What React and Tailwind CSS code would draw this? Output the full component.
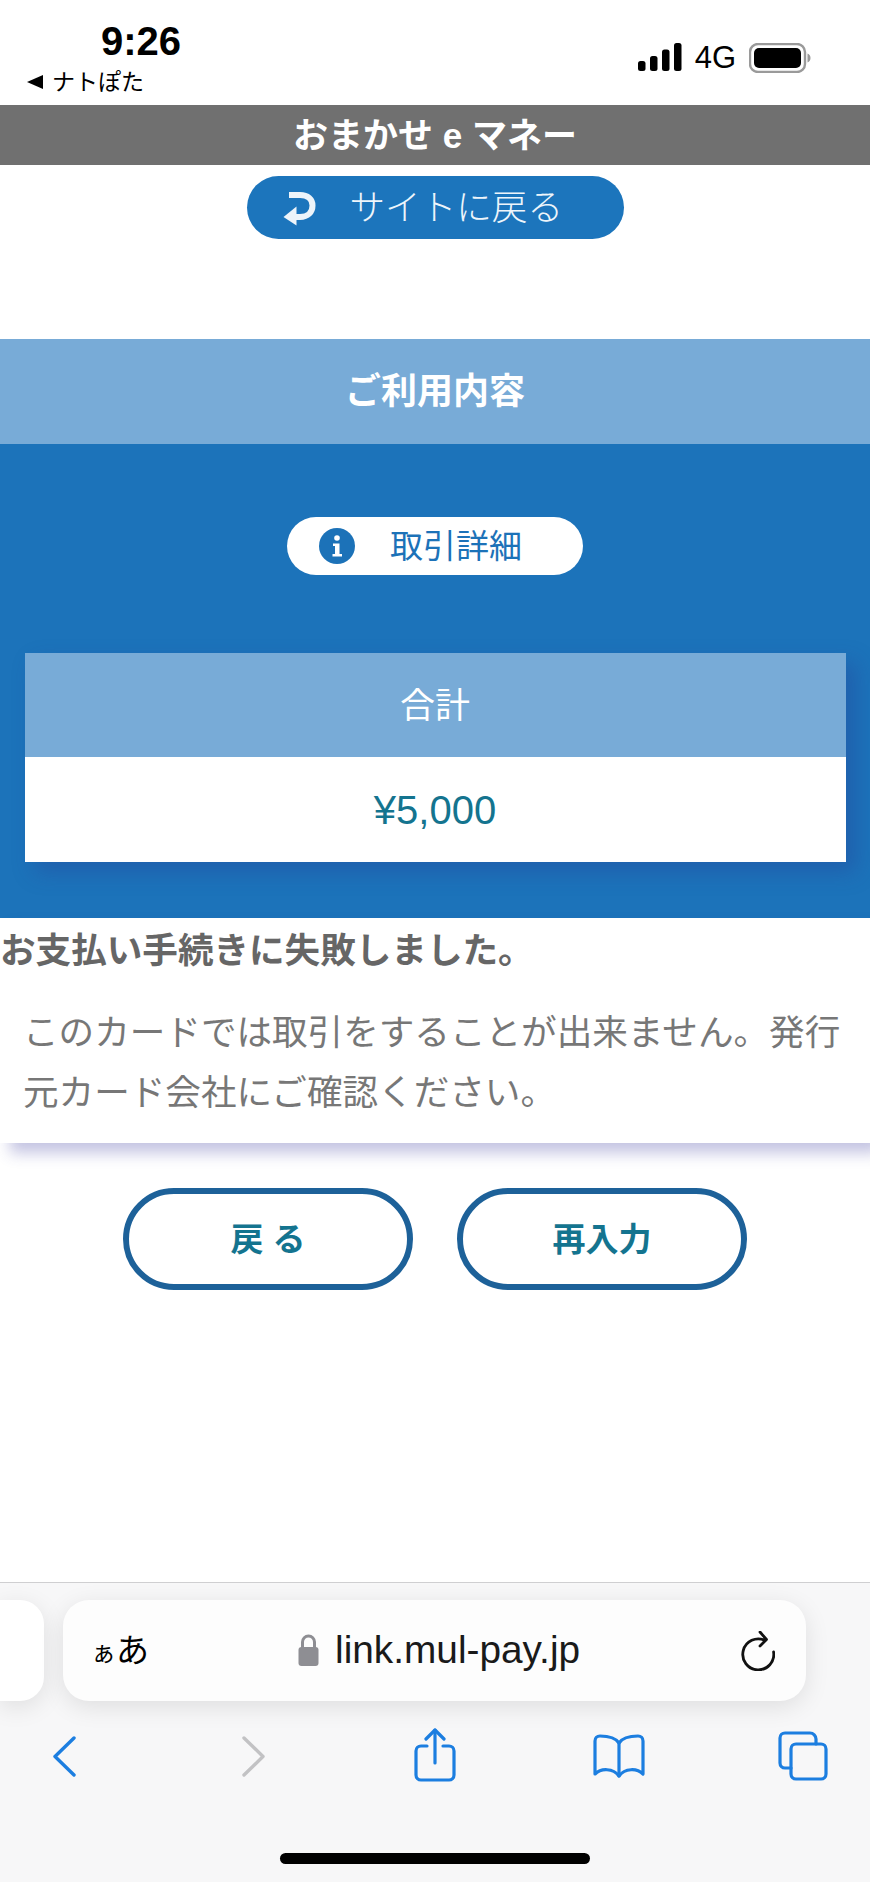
const F = "font-['Liberation_Sans','Noto_Sans_CJK_JP',sans-serif]";

function Signal() {
  return (
    <svg width="44" height="28" viewBox="0 0 44 28" fill="#000">
      <rect x="0" y="18" width="7.5" height="10" rx="2.5" />
      <rect x="12" y="13" width="7.5" height="15" rx="2.5" />
      <rect x="24" y="6.5" width="7.5" height="21.5" rx="2.5" />
      <rect x="36" y="0" width="7.5" height="28" rx="2.5" />
    </svg>
  );
}

function Battery() {
  return (
    <svg width="62" height="30" viewBox="0 0 62 30">
      <rect x="1" y="1" width="55" height="28" rx="8" fill="none" stroke="#9a9a9a" strokeWidth="2.4" />
      <rect x="5" y="5" width="47" height="20" rx="5" fill="#000" />
      <path d="M58.5 10.5c2 .6 3 2.4 3 4.5s-1 3.9-3 4.5z" fill="#9a9a9a" />
    </svg>
  );
}

function ReturnIcon() {
  return (
    <svg width="36" height="36" viewBox="0 0 36 36" fill="none" className="shrink-0">
      <path d="M6 5H17C25 5 29.500 9.500 29.500 15.500C29.500 22 25 27 17 27H10" stroke="#edf4fa" strokeWidth="6" />
      <path d="M13.500 16.500V35.500L0.500 27z" fill="#edf4fa" />
    </svg>
  );
}

function InfoIcon() {
  return (
    <svg width="36" height="36" viewBox="0 0 36 36" className="shrink-0">
      <circle cx="18" cy="18" r="18" fill="#1c72b8" />
      <circle cx="18" cy="10" r="2.800" fill="#fff" />
      <path d="M14 15.500H20.500V26H23V28.500H13.500V26H16V18H14z" fill="#fff" />
    </svg>
  );
}

function Pill({ children }) {
  return (
    <button className="w-[290px] h-[102px] rounded-[52px] border-[6px] border-[#1d6199] bg-white text-[#14748f] text-[33px] font-bold flex items-center justify-center leading-none">
      {children}
    </button>
  );
}

const BLUE = "#1c7ee0";

export default function App() {
  return (
    <div className={`w-[870px] h-[1882px] bg-white flex flex-col overflow-hidden ${F}`}>
      <div className="h-[105px] shrink-0 flex justify-between">
        <div className="pl-[27px] flex flex-col">
          <div className="pt-[20px] pl-[74px] text-[40px] leading-[42px] font-bold text-black">9:26</div>
          <div className="pt-[6px] text-[23px] leading-[28px] text-black whitespace-nowrap flex items-center gap-[9px]">
            <span className="w-0 h-0 border-y-[7px] border-y-transparent border-r-[16px] border-r-black"></span>
            <span>ナトぽた</span>
          </div>
        </div>
        <div className="pr-[59px] pt-[43px] flex items-start gap-[13px]">
          <Signal />
          <span className="text-[31px] leading-[30px] text-black">4G</span>
          <Battery />
        </div>
      </div>

      <div className="h-[60px] shrink-0 bg-[#707070] text-white text-[35px] font-bold flex items-center justify-center leading-none">
        おまかせ e マネー
      </div>

      <div className="pt-[11px] flex justify-center">
        <button className="w-[377px] h-[63px] rounded-[32px] bg-[#1c75bc] text-[#eef5fb] text-[35.600px] leading-none flex items-center pl-[36px] gap-[31px]">
          <ReturnIcon />
          <span className="font-light pt-[2px]">サイトに戻る</span>
        </button>
      </div>

      <div className="mt-[100px] h-[105px] shrink-0 bg-[#78abd7] text-white text-[36px] font-bold flex items-center justify-center leading-none">
        ご利用内容
      </div>

      <div className="h-[474px] shrink-0 bg-[#1c73ba] flex flex-col items-center pt-[73px]">
        <div className="w-[296px] h-[58px] rounded-[29px] bg-white flex items-center pl-[32px] gap-[35px]">
          <InfoIcon />
          <span className="text-[33px] text-[#1c72b8] leading-none">取引詳細</span>
        </div>
        <div className="mt-[78px] w-[821px] shadow-[10px_10px_20px_rgba(40,60,150,0.35)]">
          <div className="h-[104px] bg-[#78abd7] text-white text-[35px] flex items-center justify-center leading-none">合計</div>
          <div className="h-[105px] bg-white text-[#14748f] text-[40px] flex items-center justify-center leading-none">¥5,000</div>
        </div>
      </div>

      <div className="h-[225px] shrink-0 bg-white shadow-[10px_10px_14px_rgba(60,60,160,0.3)]">
        <div className="pt-[10px] text-[35.6px] leading-[46px] font-bold text-[#666666] whitespace-nowrap">お支払い手続きに失敗しました。</div>
        <div className="pl-[23px] pr-[22px] pt-[29px] text-[35.6px] leading-[60px] text-[#777777]">
          このカードでは取引をすることが出来ません。発行元カード会社にご確認ください。
        </div>
      </div>

      <div className="mt-[45px] flex justify-center gap-[44px]">
        <Pill>戻 る</Pill>
        <Pill>再入力</Pill>
      </div>

      <div className="mt-auto h-[300px] shrink-0 bg-[#f7f7f8] border-t border-[#cfcfd1] flex flex-col">
        <div className="mt-[17px] flex gap-[19px]">
          <div className="w-[44px] h-[101px] bg-white rounded-r-[24px] shadow-[0_6px_24px_rgba(0,0,0,0.1)]"></div>
          <div className="w-[743px] h-[101px] bg-[#fdfdfd] rounded-[26px] shadow-[0_6px_24px_rgba(0,0,0,0.1)] flex items-center pl-[28px] pr-[31px] text-black">
            <span className="text-[33px] leading-none whitespace-nowrap"><span className="text-[25px]">ぁ</span>あ</span>
            <div className="ml-[149px] flex items-center gap-[16px]">
              <svg width="21" height="32" viewBox="0 0 21 32">
                <path d="M4.500 15V8a6 6 0 0 1 12 0V15" fill="none" stroke="#8e8e93" strokeWidth="3" />
                <rect x="0.500" y="13" width="20" height="19" rx="3" fill="#8e8e93" />
              </svg>
              <span className="text-[38.8px] text-[#1a1a1a] leading-none whitespace-nowrap">link.mul-pay.jp</span>
            </div>
            <svg className="ml-auto shrink-0" width="34" height="40" viewBox="0 0 34 40" fill="none" stroke="#111" strokeWidth="2.8" strokeLinecap="round" strokeLinejoin="round">
              <path d="M24 9.400A15.500 15.500 0 1 0 32.600 21" />
              <path d="M19 1L25.500 8.500L19 15" />
            </svg>
          </div>
        </div>

        <div className="mt-[27px] h-[54px] flex items-start">
          <svg className="ml-[53px] mt-[8px]" width="23" height="41" viewBox="0 0 23 41" fill="none" stroke={BLUE} strokeWidth="3.4" strokeLinecap="round" strokeLinejoin="round">
            <path d="M21 2L2 20.500L21 39" />
          </svg>
          <svg className="ml-[166px] mt-[8px]" width="23" height="41" viewBox="0 0 23 41" fill="none" stroke="#c2c2c4" strokeWidth="3.4" strokeLinecap="round" strokeLinejoin="round">
            <path d="M2 2L21 20.500L2 39" />
          </svg>
          <svg className="ml-[149px]" width="42" height="54" viewBox="0 0 42 54" fill="none" stroke={BLUE} strokeWidth="3.2" strokeLinecap="round" strokeLinejoin="round">
            <path d="M13 18H7a5 5 0 0 0-5 5v24a5 5 0 0 0 5 5h28a5 5 0 0 0 5-5V23a5 5 0 0 0-5-5h-6" />
            <path d="M21 35V2" />
            <path d="M12 11L21 2L30 11" />
          </svg>
          <svg className="ml-[137px] mt-[6px]" width="52" height="44" viewBox="0 0 52 44" fill="none" stroke={BLUE} strokeWidth="3.2" strokeLinecap="round" strokeLinejoin="round">
            <path d="M26 9C22 3 14 2 7 2C4 2 2 4 2 7V40C8 34 20 34 26 42C32 34 44 34 50 40V7C50 4 48 2 45 2C38 2 30 3 26 9Z" />
            <path d="M26 9V42" />
          </svg>
          <svg className="ml-[133px] mt-[3px]" width="50" height="50" viewBox="0 0 50 50" fill="none" stroke={BLUE} strokeWidth="3.2" strokeLinecap="round" strokeLinejoin="round">
            <path d="M13 37H7a5 5 0 0 1-5-5V7a5 5 0 0 1 5-5h25a6 6 0 0 1 6 6v5" />
            <rect x="13" y="13" width="35" height="35" rx="5" />
          </svg>
        </div>

        <div className="mt-auto mb-[18px] mx-auto w-[310px] h-[11px] rounded-full bg-black"></div>
      </div>
    </div>
  );
}
